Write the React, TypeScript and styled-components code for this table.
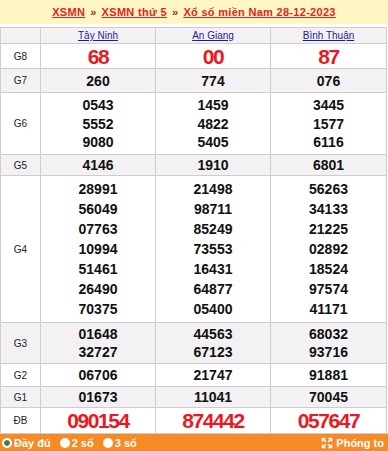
import React from 'react';
import styled, {createGlobalStyle} from 'styled-components';
import {Expand} from 'lucide-react';

const GlobalStyle = createGlobalStyle`
  html, body {
    margin: 0;
    padding: 0;
    background: #fff;
    font-family: "Liberation Sans", Arial, sans-serif;
  }
`;

const Wrapper = styled.div`
  width: 388px;
  height: 451px;
  display: flex;
  flex-direction: column;
  overflow: hidden;
`;

const TitleBar = styled.div`
  height: 24px;
  display: flex;
  justify-content: center;
  align-items: center;
  background: #fff6c4;
  font-size: 11px;
  font-weight: bold;
  letter-spacing: 0.3px;
  color: #c41a10;
  margin-bottom: 3px;

  a {
    color: #e3241b;
    text-decoration: underline;
  }

  span {
    margin: 0 5px;
    color: #a2281a;
  }
`;

const Board = styled.div`
  width: 385px;
  display: flex;
  flex-direction: column;
  gap: 1px;
  background: #cfcccc;
  border: 1px solid #cfcccc;
`;

const Row = styled.div<{$h: number; $alt?: boolean}>`
  display: grid;
  grid-template-columns: 39px 114px 114px 115px;
  column-gap: 1px;
  height: ${p => p.$h}px;

  & > div {
    background: ${p => (p.$alt ? '#f3f1f3' : '#ffffff')};
  }
`;

const Label = styled.div`
  display: flex;
  justify-content: center;
  align-items: center;
  font-size: 10px;
  color: #222;
`;

const Province = styled.div`
  display: flex;
  justify-content: center;
  align-items: center;
  font-size: 10px;

  a {
    color: #1d1d98;
    text-decoration: underline;
  }
`;

const Cell = styled.div<{$big?: boolean}>`
  display: flex;
  flex-direction: column;
  justify-content: space-evenly;
  align-items: center;
  font-weight: bold;
  font-size: ${p => (p.$big ? '21px' : '14px')};
  letter-spacing: ${p => (p.$big ? '-1.4px' : '0')};
  color: ${p => (p.$big ? '#ec1723' : '#111')};
  line-height: 1;
`;

const Footer = styled.div`
  flex: 1;
  background: #f68b25;
  display: flex;
  align-items: center;
  justify-content: space-between;
  padding: 0 4px 0 2px;
  color: #fff;
  font-size: 11px;
  font-weight: bold;
`;

const Options = styled.div`
  display: flex;
  align-items: center;
  gap: 9px;
`;

const Option = styled.div`
  display: flex;
  align-items: center;
  gap: 2px;
`;

const Radio = styled.span<{$on?: boolean}>`
  width: 10px;
  height: 10px;
  border-radius: 50%;
  background: #fff;
  box-sizing: border-box;
  border: ${p => (p.$on ? '2px solid #fff' : 'none')};
  box-shadow: ${p => (p.$on ? 'inset 0 0 0 4px #3f7d45' : 'none')};
`;

const Zoom = styled.div`
  display: flex;
  align-items: center;
  gap: 3px;
`;

type Prize = {label: string; h: number; big?: boolean; vals: string[][]};

const provinces = ['Tây Ninh', 'An Giang', 'Bình Thuận'];

const prizes: Prize[] = [
    {label: 'G8', h: 24, big: true, vals: [['68'], ['00'], ['87']]},
    {label: 'G7', h: 23, vals: [['260'], ['774'], ['076']]},
    {label: 'G6', h: 61, vals: [['0543', '5552', '9080'], ['1459', '4822', '5405'], ['3445', '1577', '6116']]},
    {label: 'G5', h: 20, vals: [['4146'], ['1910'], ['6801']]},
    {
        label: 'G4', h: 146, vals: [
            ['28991', '56049', '07763', '10994', '51461', '26490', '70375'],
            ['21498', '98711', '85249', '73553', '16431', '64877', '05400'],
            ['56263', '34133', '21225', '02892', '18524', '97574', '41171'],
        ]
    },
    {label: 'G3', h: 40, vals: [['01648', '32727'], ['44563', '67123'], ['68032', '93716']]},
    {label: 'G2', h: 22, vals: [['06706'], ['21747'], ['91881']]},
    {label: 'G1', h: 20, vals: [['01673'], ['11041'], ['70045']]},
    {label: 'ĐB', h: 25, big: true, vals: [['090154'], ['874442'], ['057647']]},
];

const App = () => {
    return (
        <Wrapper>
            <GlobalStyle/>
            <TitleBar>
                <a>XSMN</a><span>»</span><a>XSMN thứ 5</a><span>»</span><a>Xổ số miền Nam 28-12-2023</a>
            </TitleBar>
            <Board>
                <Row $h={15} $alt>
                    <Label/>
                    {provinces.map(p => (
                        <Province key={p}><a>{p}</a></Province>
                    ))}
                </Row>
                {prizes.map((pr, i) => (
                    <Row key={pr.label} $h={pr.h} $alt={i % 2 === 1}>
                        <Label>{pr.label}</Label>
                        {pr.vals.map((col, j) => (
                            <Cell key={j} $big={pr.big}>
                                {col.map(v => <div key={v}>{v}</div>)}
                            </Cell>
                        ))}
                    </Row>
                ))}
            </Board>
            <Footer>
                <Options>
                    <Option><Radio $on/>Đầy đủ</Option>
                    <Option><Radio/>2 số</Option>
                    <Option><Radio/>3 số</Option>
                </Options>
                <Zoom>
                    <Expand size={12} strokeWidth={3}/>
                    Phóng to
                </Zoom>
            </Footer>
        </Wrapper>
    );
};

export default App;
